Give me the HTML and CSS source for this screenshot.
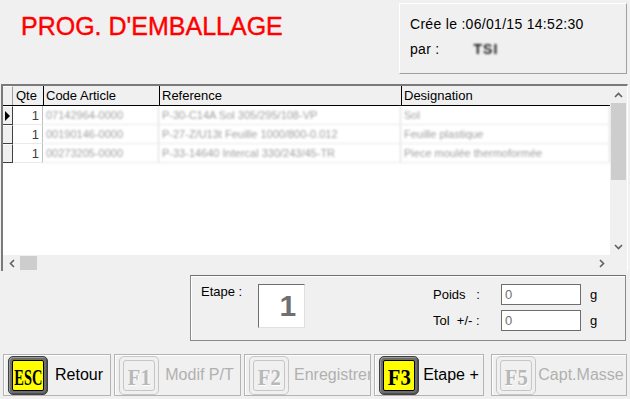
FILE: index.html
```html
<!DOCTYPE html>
<html>
<head>
<meta charset="utf-8">
<link rel="stylesheet" href="styles.css">
</head>
<body>
<div class="app">
  <header class="top">
    <h1 class="title">PROG. D'EMBALLAGE</h1>
    <div class="info">
      <div class="info-line">Crée le :06/01/15 14:52:30</div>
      <div class="info-line">par :<span class="blurred-user">TSI</span></div>
    </div>
  </header>

  <section class="grid-frame">
    <div class="grid-main">
      <div class="table">
        <div class="row head">
          <div class="cell ind"></div>
          <div class="cell">Qte</div>
          <div class="cell sep">Code Article</div>
          <div class="cell sep">Reference</div>
          <div class="cell sep">Designation</div>
        </div>
        <div class="row data">
          <div class="cell ind current"><span class="tri"></span></div>
          <div class="cell num">1</div>
          <div class="cell blur">07142964-0000</div>
          <div class="cell blur">P-30-C14A Sol 305/295/108-VP</div>
          <div class="cell blur">Sol</div>
        </div>
        <div class="row data">
          <div class="cell ind"></div>
          <div class="cell num">1</div>
          <div class="cell blur">00190146-0000</div>
          <div class="cell blur">P-27-Z/U13t Feuille 1000/800-0.012</div>
          <div class="cell blur">Feuille plastique</div>
        </div>
        <div class="row data">
          <div class="cell ind"></div>
          <div class="cell num">1</div>
          <div class="cell blur">00273205-0000</div>
          <div class="cell blur">P-33-14640 Intercal 330/243/45-TR</div>
          <div class="cell blur">Piece moulée thermoformée</div>
        </div>
      </div>
      <div class="vscroll">
        <div class="arrow">
          <svg width="9" height="6" viewBox="0 0 9 6"><path d="M1 5 L4.5 1.5 L8 5" fill="none" stroke="#606060" stroke-width="1.6"/></svg>
        </div>
        <div class="vthumb"></div>
        <div class="vtrack"></div>
        <div class="arrow">
          <svg width="9" height="6" viewBox="0 0 9 6"><path d="M1 1 L4.5 4.5 L8 1" fill="none" stroke="#606060" stroke-width="1.6"/></svg>
        </div>
      </div>
    </div>
    <div class="hscroll">
      <div class="harrow">
        <svg width="6" height="9" viewBox="0 0 6 9"><path d="M5 1 L1.5 4.5 L5 8" fill="none" stroke="#606060" stroke-width="1.6"/></svg>
      </div>
      <div class="hthumb"></div>
      <div class="htrack"></div>
      <div class="harrow">
        <svg width="6" height="9" viewBox="0 0 6 9"><path d="M1 1 L4.5 4.5 L1 8" fill="none" stroke="#606060" stroke-width="1.6"/></svg>
      </div>
      <div class="corner"></div>
    </div>
  </section>

  <section class="panel">
    <div class="etape">
      <span class="lbl">Etape :</span>
      <div class="etape-box">1</div>
    </div>
    <div class="fields">
      <div class="field">
        <span class="flbl">Poids&nbsp;&nbsp; :</span>
        <div class="input">0</div>
        <span class="unit">g</span>
      </div>
      <div class="field">
        <span class="flbl">Tol&nbsp; +/- :</span>
        <div class="input">0</div>
        <span class="unit">g</span>
      </div>
    </div>
  </section>

  <nav class="buttons">
    <button class="btn b-esc">
      <span class="key on"><span class="face"><span class="ktext k-esc">ESC</span></span></span>
      <span class="blabel">Retour</span>
    </button>
    <button class="btn b-f1 dis">
      <span class="key off"><span class="face"><span class="ktext k-f">F1</span></span></span>
      <span class="blabel">Modif P/T</span>
    </button>
    <button class="btn b-f2 dis">
      <span class="key off"><span class="face"><span class="ktext k-f">F2</span></span></span>
      <span class="blabel">Enregistrer</span>
    </button>
    <button class="btn b-f3">
      <span class="key on"><span class="face"><span class="ktext k-f">F3</span></span></span>
      <span class="blabel">Etape +</span>
    </button>
    <button class="btn b-f5 dis">
      <span class="key off"><span class="face"><span class="ktext k-f">F5</span></span></span>
      <span class="blabel">Capt.Masse</span>
    </button>
  </nav>
</div>
</body>
</html>
```

FILE: styles.css
```css
* { box-sizing: border-box; }
html, body {
  margin: 0;
  padding: 0;
  background: #f0f0f0;
}
body {
  width: 630px;
  height: 399px;
  overflow: hidden;
  font-family: "Liberation Sans", Arial, sans-serif;
  font-size: 13px;
  color: #000;
}
.app {
  display: flex;
  flex-direction: column;
  height: 399px;
}

/* header */
.top {
  display: flex;
  height: 84px;
}
.title {
  margin: 12px 0 0 21px;
  font-size: 25px;
  font-weight: normal;
  line-height: 28px;
  color: #ff0000;
  -webkit-text-stroke: 0.4px #ff0000;
  white-space: nowrap;
}
.info {
  margin: 3px 3px 0 auto;
  width: 228px;
  height: 71px;
  border-top: 1px solid #ffffff;
  border-left: 1px solid #ffffff;
  border-right: 1px solid #a0a0a0;
  border-bottom: 1px solid #a0a0a0;
  padding: 10px 0 0 10px;
}
.info-line {
  height: 25px;
  line-height: 20px;
  font-size: 14px;
  letter-spacing: 0.3px;
  white-space: nowrap;
}
.blurred-user {
  display: inline-block;
  margin-left: 34px;
  color: #202020;
  font-weight: bold;
  filter: blur(1.2px);
  letter-spacing: 1px;
}

/* grid */
.grid-frame {
  margin-left: 1px;
  width: 627px;
  height: 187px;
  border-top: 2px solid #7a7a7a;
  border-left: 2px solid #7a7a7a;
  border-right: 1px solid #ffffff;
  display: flex;
  flex-direction: column;
}
.grid-main {
  display: flex;
  height: 169px;
}
.table {
  flex: 1;
  background: #ffffff;
}
.row {
  display: grid;
  grid-template-columns: 10px 30px 116px 242px 1fr;
}
.row.head {
  height: 20px;
  background: #f0f0f0;
  border-bottom: 1px solid #000;
}
.row.data {
  height: 19px;
}
.cell {
  padding-left: 3px;
  line-height: 19px;
  white-space: nowrap;
  overflow: hidden;
  border-right: 1px solid #d8d8d8;
  border-bottom: 1px solid #eaeaea;
}
.row.head .cell {
  border-right: none;
  border-bottom: none;
  line-height: 20px;
}
.row.head .cell.sep {
  border-left: 1px solid #000;
  padding-left: 2px;
}
.row.head .cell.ind {
  border-right: 1px solid #a0a0a0;
}
.cell.ind {
  padding: 0;
  background: #f0f0f0;
  border-top: 1px solid #fff;
  border-right: 1px solid #404040;
  border-bottom: 1px solid #404040;
  position: relative;
}
.tri {
  position: absolute;
  left: 2px;
  top: 4px;
  width: 0;
  height: 0;
  border-top: 5px solid transparent;
  border-bottom: 5px solid transparent;
  border-left: 5px solid #000;
}
.cell.num {
  text-align: right;
  padding-right: 3px;
  color: #404040;
  border-right: 1px solid #c0c0c0;
}
.cell.blur {
  color: #a0a0a0;
  font-size: 11px;
  filter: blur(1.3px);
}

.vscroll {
  width: 17px;
  display: flex;
  flex-direction: column;
  background: #f0f0f0;
}
.arrow {
  height: 17px;
  display: flex;
  align-items: center;
  justify-content: center;
}
.vthumb {
  margin-left: 1px;
  width: 15px;
  height: 77px;
  background: #cdcdcd;
}
.vtrack { flex: 1; }

.hscroll {
  display: flex;
  height: 16px;
  background: #f0f0f0;
}
.harrow {
  width: 17px;
  display: flex;
  align-items: center;
  justify-content: center;
}
.hthumb {
  width: 17px;
  margin: 1px 0;
  background: #cdcdcd;
}
.htrack { flex: 1; }
.corner { width: 17px; }

/* panel */
.panel {
  margin: 4px 0 0 190px;
  width: 436px;
  height: 66px;
  border: 1px solid #8a8a8a;
  border-top-color: #6e6e6e;
  box-shadow: inset 1px 1px 0 #ffffff;
  display: flex;
  padding: 7px 0 0 10px;
}
.etape {
  display: flex;
  align-items: flex-start;
  width: 232px;
}
.lbl {
  line-height: 18px;
}
.etape-box {
  margin-left: 16px;
  width: 47px;
  height: 44px;
  margin-top: 1px;
  background: #ffffff;
  border-top: 1px solid #6e6e6e;
  border-left: 1px solid #6e6e6e;
  border-right: 1px solid #e0e0e0;
  border-bottom: 1px solid #e0e0e0;
  text-align: right;
  padding-right: 8px;
  font-size: 30px;
  font-weight: bold;
  line-height: 42px;
  color: #707070;
}
.fields {
  display: flex;
  flex-direction: column;
  gap: 6px;
  padding-top: 1px;
}
.field {
  display: flex;
  align-items: center;
  height: 20px;
}
.flbl {
  width: 68px;
  white-space: pre;
}
.input {
  width: 80px;
  height: 21px;
  background: #ffffff;
  border: 1px solid #6e6e6e;
  padding-left: 3px;
  line-height: 19px;
  color: #707070;
}
.unit {
  margin-left: 9px;
}

/* buttons */
.buttons {
  display: flex;
  margin-top: 13px;
  padding-left: 3px;
  height: 42px;
}
.btn {
  height: 42px;
  display: flex;
  align-items: center;
  padding: 0 0 0 4px;
  background: #f0f0f0;
  border: 1px solid #b4b4b4;
  box-shadow: inset 1px 1px 0 #ffffff;
  font-family: "Liberation Sans", Arial, sans-serif;
  font-size: 16px;
  color: #000;
  cursor: default;
  overflow: hidden;
}
.b-esc { width: 108px; }
.b-f1 { width: 127px; margin-left: 3px; }
.b-f2 { width: 127px; margin-left: 3px; }
.b-f3 { width: 110px; margin-left: 3px; }
.b-f5 { width: 136px; margin-left: 7px; }
.blabel {
  flex: 1;
  min-width: 0;
  text-align: center;
  white-space: nowrap;
}
.btn.dis .blabel {
  color: #b0b0b0;
}
.b-f2 .blabel { text-align: left; padding-left: 5px; }
.key {
  flex: none;
  width: 40px;
  height: 39px;
  border-radius: 5px;
  display: flex;
}
.key.on {
  background: #6e6e6e;
  border: 1px solid #404040;
  box-shadow: inset 1px 1px 0 #9a9a9a, inset -1px -1px 0 #505050;
  padding: 3px;
}
.key.off {
  border: 1px solid #c6c6c6;
  padding: 3px;
}
.face {
  flex: 1 1 0;
  min-width: 0;
  display: flex;
  align-items: center;
  justify-content: center;
  border-radius: 2px;
}
.key.on .face {
  background: #ffff00;
  border: 1px solid #000;
}
.key.off .face {
  border: 1px solid #c6c6c6;
  border-radius: 3px;
}
.ktext {
  flex: none;
  display: inline-block;
  font-family: "Liberation Serif", "Times New Roman", serif;
  font-weight: bold;
  font-size: 24px;
  line-height: 24px;
  color: #000;
  white-space: nowrap;
}
.k-esc {
  transform: translateY(2px) scaleX(0.6);
}
.k-f {
  transform: translateY(2px) scaleX(0.86);
}
.key.off .ktext {
  color: #b8b8b8;
  text-shadow: 1px 1px 0 #ffffff;
}
```
